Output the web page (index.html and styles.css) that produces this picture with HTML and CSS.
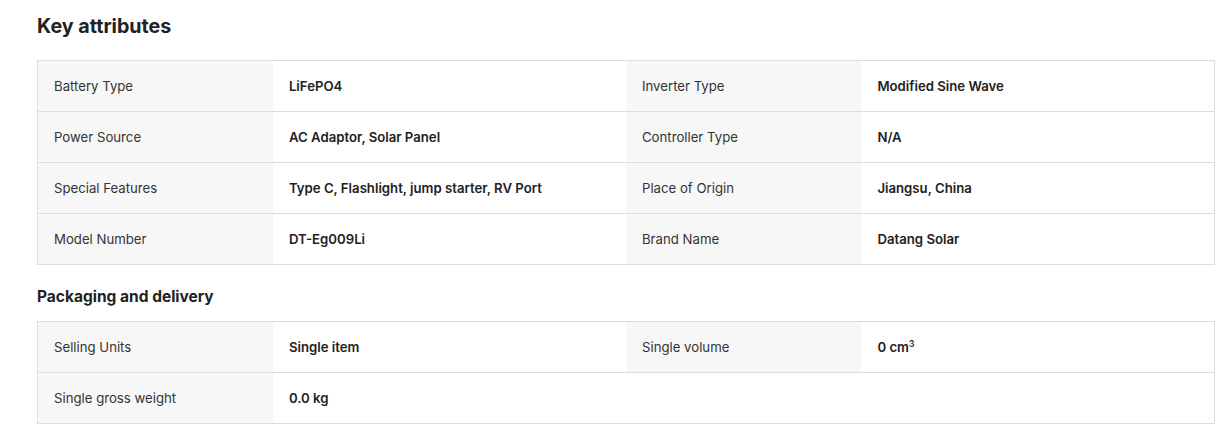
FILE: index.html
```html
<!DOCTYPE html>
<html lang="en">
<head>
    <meta charset="UTF-8">
    <meta name="viewport" content="width=device-width, initial-scale=1.0">
    <title>Key attributes</title>
    <link rel="stylesheet" href="styles.css">
</head>
<body>
    <div class="attributes">
        <h2>Key attributes</h2>
        <table class="attr-table">
            <colgroup>
                <col class="col-name">
                <col class="col-value">
                <col class="col-name">
                <col class="col-value">
            </colgroup>
            <tr>
                <td class="attr-name">Battery Type</td>
                <td class="attr-value">LiFePO4</td>
                <td class="attr-name">Inverter Type</td>
                <td class="attr-value">Modified Sine Wave</td>
            </tr>
            <tr>
                <td class="attr-name">Power Source</td>
                <td class="attr-value">AC Adaptor, Solar Panel</td>
                <td class="attr-name">Controller Type</td>
                <td class="attr-value">N/A</td>
            </tr>
            <tr>
                <td class="attr-name">Special Features</td>
                <td class="attr-value">Type C, Flashlight, jump starter, RV Port</td>
                <td class="attr-name">Place of Origin</td>
                <td class="attr-value">Jiangsu, China</td>
            </tr>
            <tr>
                <td class="attr-name">Model Number</td>
                <td class="attr-value">DT-Eg009Li</td>
                <td class="attr-name">Brand Name</td>
                <td class="attr-value">Datang Solar</td>
            </tr>
        </table>

        <h3>Packaging and delivery</h3>
        <table class="attr-table">
            <colgroup>
                <col class="col-name">
                <col class="col-value">
                <col class="col-name">
                <col class="col-value">
            </colgroup>
            <tr>
                <td class="attr-name">Selling Units</td>
                <td class="attr-value">Single item</td>
                <td class="attr-name">Single volume</td>
                <td class="attr-value">0 cm<sup>3</sup></td>
            </tr>
            <tr>
                <td class="attr-name">Single gross weight</td>
                <td class="attr-value">0.0 kg</td>
                <td class="attr-empty"></td>
                <td class="attr-empty"></td>
            </tr>
        </table>
    </div>
</body>
</html>
```

FILE: styles.css
```css
body {
    font-family: Inter, 'Noto Sans', sans-serif;
    background: #ffffff;
    color: #222222;
    margin: 0;
    padding: 0 11px 0 37px;
}

.attributes h2 {
    font-size: 19.7px;
    line-height: 28px;
    font-weight: 700;
    color: #222222;
    margin: 12px 0 20px;
}

.attributes h3 {
    font-size: 15.5px;
    line-height: 24px;
    font-weight: 700;
    color: #222222;
    margin: 20px 0 12px;
}

.attr-table {
    width: 100%;
    border-collapse: collapse;
    border: 1px solid #dddddd;
    table-layout: fixed;
    font-size: 13.2px;
    line-height: 20px;
}

.col-name {
    width: 20%;
}

.col-value {
    width: 30%;
}

.attr-table td {
    height: 50px;
    padding: 0 16px;
    border-bottom: 1px solid #dddddd;
    vertical-align: middle;
}

.attr-name {
    background: #f7f7f7;
    color: #333333;
}

.attr-value {
    font-weight: 600;
    color: #222222;
}

.attr-empty {
    background: #ffffff;
}

.attr-value sup {
    font-size: 8.5px;
    line-height: 0;
    vertical-align: 5px;
}
```
